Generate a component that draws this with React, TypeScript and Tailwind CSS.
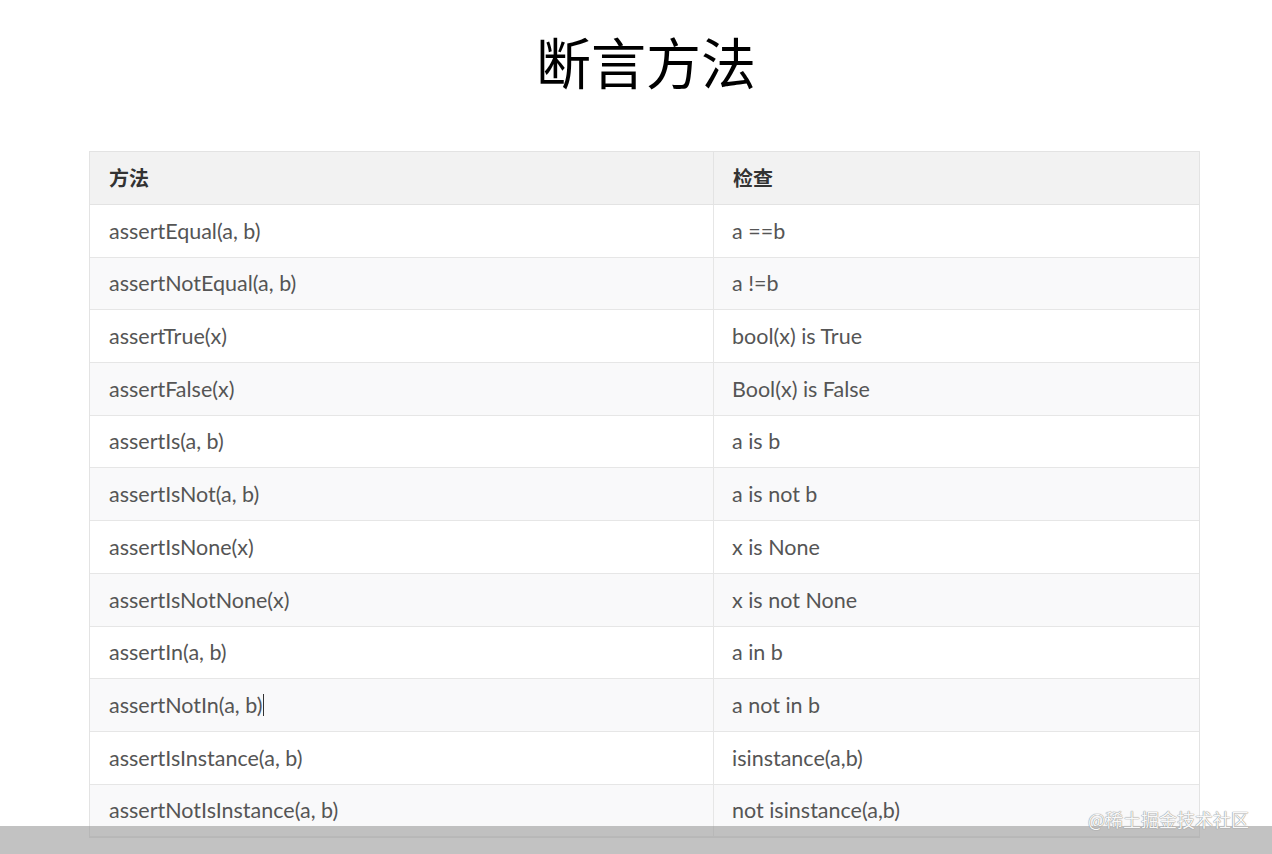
import React from "react";

const rows: [string, string][] = [
  ["assertEqual(a, b)", "a ==b"],
  ["assertNotEqual(a, b)", "a !=b"],
  ["assertTrue(x)", "bool(x) is True"],
  ["assertFalse(x)", "Bool(x) is False"],
  ["assertIs(a, b)", "a is b"],
  ["assertIsNot(a, b)", "a is not b"],
  ["assertIsNone(x)", "x is None"],
  ["assertIsNotNone(x)", "x is not None"],
  ["assertIn(a, b)", "a in b"],
  ["assertNotIn(a, b)", "a not in b"],
  ["assertIsInstance(a, b)", "isinstance(a,b)"],
  ["assertNotIsInstance(a, b)", "not isinstance(a,b)"],
];

export default function App() {
  return (
    <div
      className="relative w-[1272px] h-[854px] overflow-hidden bg-white"
      style={{ fontFamily: "Lato, 'Noto Sans CJK SC', sans-serif" }}
    >
      <div className="flex justify-center pt-[20px] pl-[20px]">
        <h1
          className="text-[55px] leading-[80px] text-black"
          style={{ fontFamily: "'Noto Sans CJK SC', sans-serif" }}
        >
          断言方法
        </h1>
      </div>
      <div className="ml-[89px] mt-[51px] w-[1111px] border border-[#e3e3e3] text-[21.5px] text-[#555]">
        <div className="grid grid-cols-[624px_1fr] h-[53px] bg-[#f2f2f2] border-b border-[#e3e3e3] font-bold text-[#333] text-[20px]">
          <div className="flex items-center pl-[19px] border-r border-[#e3e3e3]" style={{ fontFamily: "'Noto Sans CJK SC', sans-serif" }}>方法</div>
          <div className="flex items-center pl-[19px]" style={{ fontFamily: "'Noto Sans CJK SC', sans-serif" }}>检查</div>
        </div>
        {rows.map(([m, c], i) => (
          <div
            key={m}
            className={`grid grid-cols-[624px_1fr] h-[52.7px] border-b border-[#e6e6e6] ${i % 2 === 1 ? "bg-[#f9f9fa]" : "bg-white"}`}
          >
            <div className="flex items-center pl-[19px] border-r border-[#e6e6e6]">
              {m}
              {i === 9 && <span className="ml-[1px] inline-block w-[1px] h-[22px] bg-[#333]" />}
            </div>
            <div className="flex items-center pl-[18px]">{c}</div>
          </div>
        ))}
      </div>
      <div className="absolute left-0 right-0 bottom-0 h-[28px] bg-[#9a9a9a]/60" />
      <div
        className="absolute left-[1088px] top-[806px] text-[18px] leading-[26px] text-[#f8f8f8]"
        style={{
          fontFamily: "'Noto Sans CJK SC', sans-serif",
          textShadow: "0 0 1px #888, 0 0 1px #888",
        }}
      >
        @稀土掘金技术社区
      </div>
    </div>
  );
}
